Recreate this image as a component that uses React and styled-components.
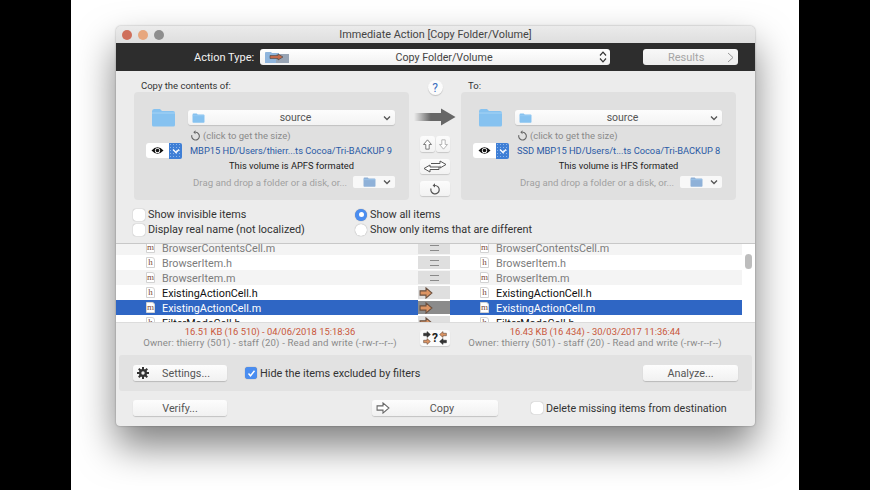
import React from "react";
import styled, { createGlobalStyle } from "styled-components";

const Global = createGlobalStyle`
  html, body { margin: 0; padding: 0; background: #000; }
  body { font-family: "Roboto", "Liberation Sans", sans-serif; font-size: 11px; color: #333; }
`;

const Stage = styled.div`
  width: 870px; height: 490px; background: #000; overflow: hidden;
  display: flex; justify-content: center;
`;
const Sheet = styled.div`
  width: 728px; height: 490px; background: #fff; overflow: hidden; padding: 26px 0 0 45px; box-sizing: border-box;
`;
const Win = styled.div`
  width: 639px; height: 400px; background: #ececec; border-radius: 5px 5px 4px 4px;
  box-shadow: 0 20px 38px rgba(0,0,0,.5), 0 0 2px rgba(0,0,0,.35);
  display: flex; flex-direction: column; overflow: visible;
`;
const TitleBar = styled.div`
  height: 17px; position: relative; display: flex; align-items: center; justify-content: center;
  background: linear-gradient(#ebebeb, #dedede); border-radius: 5px 5px 0 0;
  font-size: 10.85px; color: #444;
`;
const Lights = styled.div`
  position: absolute; left: 6px; top: 4px; display: flex; gap: 6px;
`;
const Light = styled.span`
  width: 10px; height: 10px; border-radius: 50%; background: ${p => p.$c};
`;
const ActionBar = styled.div`
  height: 28px; background: #2d2d2d; display: flex; align-items: center; padding-left: 78px;
`;
const ActionLabel = styled.span`
  color: #f2f2f2; font-size: 11px; width: 60px; margin-right: 6px; white-space: nowrap;
`;
const BigSelect = styled.div`
  width: 350px; height: 16px; background: linear-gradient(#fff, #f1f1f1); border-radius: 3px;
  display: flex; align-items: center; padding: 0 3px 0 5px; box-sizing: border-box; color: #444;
`;
const BigSelectText = styled.span`
  flex: 1; text-align: center; font-size: 10.7px;
`;
const ResultsButton = styled.div`
  width: 95px; height: 16px; margin-left: 33px; background: linear-gradient(#f8f8f8, #ececec); border-radius: 3px;
  display: flex; align-items: center; padding: 0 4px 0 25px; box-sizing: border-box;
  color: #a5a5a5; font-size: 11px;
`;
const ResultsText = styled.span`
  flex: 1;
`;
const Main = styled.div`
  height: 172px; box-sizing: border-box; padding: 9px 0 0 18px;
`;
const Columns = styled.div`
  display: grid; grid-template-columns: 275px 52px 275px;
`;
const Side = styled.div`
  display: flex; flex-direction: column;
`;
const SideLabel = styled.div`
  height: 12px; line-height: 12px; padding-left: 7px; font-size: 9.5px; color: #333;
`;
const Panel = styled.div`
  height: 108px; box-sizing: border-box; background: #e0e0e0; border-radius: 4px; padding-top: 18px;
  display: flex; flex-direction: column;
`;
const FolderRow = styled.div`
  display: flex; align-items: center; padding-left: 17px; gap: 12px; height: 15px;
`;
const PopUp = styled.div`
  width: 207px; height: 15px; background: linear-gradient(#fdfdfd, #f3f3f3); border-radius: 3px; box-sizing: border-box;
  box-shadow: 0 1px 1px rgba(0,0,0,.14); display: flex; align-items: center; padding: 0 4px; color: #555; font-size: 10.5px;
`;
const PopUpText = styled.span`
  flex: 1; text-align: center; padding-left: 3px;
`;
const SizeRow = styled.div`
  display: flex; align-items: center; gap: 2px; height: 14px; margin-top: 3px; padding-left: 56px; color: #8a8a8a; font-size: 9.5px;
`;
const PathRow = styled.div`
  display: flex; align-items: center; height: 15px; margin-top: 1px; padding-left: 12px;
`;
const EyeButton = styled.div`
  width: 23px; height: 15px; background: #fff; border-radius: 3px 0 0 3px; display: flex; align-items: center; justify-content: center;
`;
const Badge = styled.div`
  width: 13px; height: 16px; border-radius: 0 2px 2px 0; display: flex; align-items: center; justify-content: center;
  background-color: #3f7fd6;
  background-image: radial-gradient(#8db6ea 0.7px, transparent 0.8px);
  background-size: 3px 3px;
`;
const PathText = styled.span`
  margin-left: 8px; color: #2a5aa5; font-size: 9.3px; white-space: nowrap;
`;
const VolumeText = styled.div`
  height: 14px; line-height: 14px; margin-top: 1px; color: #222; font-size: 9.3px; text-align: center; padding-left: 40px;
`;
const DragRow = styled.div`
  display: flex; align-items: center; height: 14px; margin-top: 2px; padding: 0 14px 0 59px; color: #a0a0a0; font-size: 9.65px; justify-content: space-between;
`;
const MiniPopUp = styled.div`
  width: 42px; height: 12px; background: #f8f8f8; border-radius: 2px; display: flex; align-items: center; justify-content: space-between; padding: 0 4px 0 10px; box-sizing: border-box;
`;
const Center = styled.div`
  display: flex; flex-direction: column; align-items: center;
`;
const Help = styled.div`
  width: 15px; height: 15px; border-radius: 50%; background: #fbfbfb; color: #3d6fc0; font-size: 12px;
  box-shadow: 0 1px 1px rgba(0,0,0,.18); display: flex; align-items: center; justify-content: center;
`;
const BigArrow = styled.div`
  margin-top: 13px; height: 18px; display: flex;
`;
const PairRow = styled.div`
  display: flex; gap: 1px; margin-top: 10px;
`;
const ToolButton = styled.div`
  width: ${p => p.$w}px; height: ${p => p.$h}px; margin-top: ${p => p.$mt || 0}px; background: linear-gradient(#fcfcfc, #f2f2f2); border-radius: 3px;
  box-shadow: 0 1px 1px rgba(0,0,0,.16); display: flex; align-items: center; justify-content: center;
`;
const Options = styled.div`
  margin-top: 7px; margin-left: -1px; display: grid; grid-template-columns: 222px auto; grid-auto-rows: 15px; font-size: 10.85px; color: #333;
`;
const Opt = styled.div`
  display: flex; align-items: center; gap: 3px; white-space: nowrap;
`;
const Check = styled.span`
  width: 12px; height: 12px; box-sizing: border-box; border-radius: ${p => (p.$round ? "50%" : "3px")};
  background: ${p => (p.$on ? "#4a8df0" : "#fff")}; box-shadow: 0 0 1px rgba(0,0,0,.45);
  display: inline-flex; align-items: center; justify-content: center; flex: none;
`;
const Dot = styled.span`
  width: 5px; height: 5px; border-radius: 50%; background: #fff;
`;
const List = styled.div`
  height: 79px; box-sizing: border-box; overflow: hidden; background: #fff; border-top: 1px solid #c8c8c8; position: relative;
`;
const ListInner = styled.div`
  margin-top: -4px;
`;
const Row = styled.div`
  height: 15px; display: grid; grid-template-columns: 302px 32px 292px 13px; background: ${p => (p.$alt ? "#f4f4f4" : "#fff")};
  color: ${p => (p.$c)}; font-size: 10.8px;
`;
const Name = styled.div`
  display: flex; align-items: center; gap: 7px; padding: 1px 0 0 30px; box-sizing: border-box; background: ${p => (p.$sel ? "#2f66c4" : "transparent")}; white-space: nowrap;
`;
const FileIcon = styled.span`
  width: 9px; height: 11px; box-sizing: border-box; background: #fff; border: 1px solid #d2d2d2; border-top-right-radius: 3px; margin-top: -1px;
  font-family: "Liberation Serif", serif; font-size: 9px; line-height: 9px; color: #7a4a3a; text-align: center; flex: none;
`;
const Mid = styled.div`
  margin: 1px 0; background: ${p => (p.$sel ? "#8b8b8b" : "#dfdfdf")}; display: flex; align-items: center;
  justify-content: ${p => (p.$eq ? "center" : "flex-start")}; padding-left: ${p => (p.$eq ? 0 : 1)}px;
`;
const EqualSign = styled.span`
  width: 9px; height: 4px; border-top: 1px solid #8a8a8a; border-bottom: 1px solid #8a8a8a;
`;
const Gutter = styled.div`
  background: #fff;
`;
const Thumb = styled.div`
  position: absolute; right: 3px; top: 10px; width: 7px; height: 15px; border-radius: 4px; background: #bdbdbd;
`;
const Info = styled.div`
  height: 33px; display: grid; grid-template-columns: 304px 30px 305px; box-sizing: border-box; border-top: 1px solid #dcdcdc;
`;
const InfoText = styled.div`
  padding: 3px ${p => p.$pr || 0}px 0 ${p => p.$pl || 0}px; text-align: center; line-height: 11px; font-size: 9.6px; letter-spacing: .15px; color: #8a8a8a; white-space: nowrap;
`;
const Stamp = styled.div`
  color: #c9563a; font-size: 9.4px; letter-spacing: 0; height: 11px;
`;
const MidInfo = styled.div`
  height: 16px; margin-top: 7px; background: #fbfbfb; border-radius: 3px; box-shadow: 0 1px 1px rgba(0,0,0,.15);
  display: flex; align-items: center; justify-content: center; gap: 1px;
`;
const ArrowStack = styled.span`
  display: flex; flex-direction: column; gap: 0;
`;
const QuestionMark = styled.span`
  font-weight: 700; color: #222; font-size: 12px;
`;
const Filters = styled.div`
  height: 36px; margin: 0 3px; background: #e2e2e2; border-radius: 3px; display: flex; align-items: center; padding: 0 14px;
`;
const Btn = styled.div`
  width: ${p => p.$w}px; height: 16px; background: linear-gradient(#fdfdfd, #f1f1f1); border-radius: 3px; box-shadow: 0 1px 1px rgba(0,0,0,.18);
  display: flex; align-items: center; position: relative; justify-content: center; color: #555; font-size: 10.8px; flex: none;
  box-sizing: border-box; padding-left: ${p => p.$pl || 0}px;
  margin-left: ${p => p.$ml || 0}px;
`;
const BtnIcon = styled.span`
  position: absolute; left: ${p => p.$l}px; top: 2px; display: flex;
`;
const CheckLabel = styled.label`
  display: flex; align-items: center; gap: 3px; color: #333; font-size: ${p => p.$fs}px; white-space: nowrap; margin-left: ${p => p.$ml}px;
`;
const Bottom = styled.div`
  flex: 1; display: flex; align-items: center; padding-left: 17px; padding-bottom: 1px;
`;
const Spacer = styled.div`flex: 1;`;

const Folder = ({ w = 25, h = 19, c = "#86c2f0" }) => (
  <svg width={w} height={h} viewBox="0 0 25 19" style={{ flex: "none" }}>
    <path d="M1 3.5Q1 1 3 1h6l2 2h11q2 0 2 2v12q0 1.5-1.5 1.5h-20Q1 18.5 1 17z" fill={c} />
    <path d="M1 5h23" stroke="#a5d3f5" strokeWidth="1" />
  </svg>
);
const Chevron = ({ c = "#555" }) => (
  <svg width="8" height="6" viewBox="0 0 8 6" style={{ flex: "none" }}><path d="M1 1.5l3 3 3-3" fill="none" stroke={c} strokeWidth="1.3" /></svg>
);
const Refresh = ({ s = 11, c = "#666" }) => (
  <svg width={s} height={s} viewBox="0 0 12 12" style={{ flex: "none" }}>
    <path d="M6 2.5a4.2 4.2 0 1 1-4 3" fill="none" stroke={c} strokeWidth="1.2" />
    <path d="M6 .2v4.4L3.6 2.4z" fill={c} />
  </svg>
);
const Eye = () => (
  <svg width="13" height="9" viewBox="0 0 13 9">
    <path d="M.5 4.5Q6.5-2 12.5 4.5 6.5 11 .5 4.5z" fill="#111" />
    <circle cx="6.5" cy="4.5" r="2.6" fill="#fff" /><circle cx="6.5" cy="4.5" r="1.8" fill="#111" />
  </svg>
);
const Tick = ({ s = 9 }) => (
  <svg width={s} height={s} viewBox="0 0 9 9"><path d="M1.5 4.5l2 2.3 4-5" fill="none" stroke="#fff" strokeWidth="1.4" /></svg>
);
const HollowArrow = ({ d = "right", w = 13, h = 11, fill = "#fff", stroke = "#666" }) => {
  const rot = { right: 0, left: 180, up: -90, down: 90 }[d];
  return (
    <svg width={w} height={h} viewBox="0 0 13 11" style={{ flex: "none", display: "block" }}>
      <path d="M1 3.5h5.5V.8L12 5.5 6.5 10.2V7.5H1z" fill={fill} stroke={stroke} strokeWidth="1" transform={`rotate(${rot} 6.5 5.5)`} />
    </svg>
  );
};
const OrangeArrow = () => <HollowArrow w={14} h={12} fill="#dc9463" stroke="#6a5040" />;
const Gear = () => (
  <svg width="12" height="12" viewBox="0 0 12 12">
    <g fill="#333">
      <circle cx="6" cy="6" r="4" />
      {[0, 45, 90, 135].map(a => <rect key={a} x="5" y="0" width="2" height="12" transform={`rotate(${a} 6 6)`} />)}
    </g>
    <circle cx="6" cy="6" r="1.7" fill="#eee" />
  </svg>
);
const ActionGlyph = () => (
  <svg width="24" height="12" viewBox="0 0 24 12" style={{ flex: "none" }}>
    <path d="M0 2q0-1 1-1h5l1 1h7v10H0z" fill="#8fb5dd" />
    <rect x="11" y="3" width="13" height="9" fill="#98a4b4" />
    <path d="M5 4.5h8V3l5 3-5 3V7.5H5z" fill="#c46a4a" stroke="#444" strokeWidth=".6" />
  </svg>
);
const Stepper = () => (
  <svg width="8" height="12" viewBox="0 0 8 12" style={{ flex: "none" }}>
    <path d="M1 4.5L4 1.2l3 3.3M1 7.5l3 3.3 3-3.3" fill="none" stroke="#333" strokeWidth="1.2" />
  </svg>
);

const SidePanel = ({ label, path, volume }) => (
  <Side>
    <SideLabel>{label}</SideLabel>
    <Panel>
      <FolderRow>
        <Folder />
        <PopUp>
          <Folder w={13} h={10} />
          <PopUpText>source</PopUpText>
          <Chevron />
        </PopUp>
      </FolderRow>
      <SizeRow><Refresh />(click to get the size)</SizeRow>
      <PathRow>
        <EyeButton><Eye /></EyeButton>
        <Badge><Chevron c="#fff" /></Badge>
        <PathText>{path}</PathText>
      </PathRow>
      <VolumeText>{volume}</VolumeText>
      <DragRow>
        <span>Drag and drop a folder or a disk, or...</span>
        <MiniPopUp><Folder w={13} h={10} c="#8fb1d8" /><Chevron /></MiniPopUp>
      </DragRow>
    </Panel>
  </Side>
);

const rows = [
  { n: "BrowserContentsCell.m", k: "m", alt: true, c: "#7c7c7c", st: "eq" },
  { n: "BrowserItem.h", k: "h", c: "#7c7c7c", st: "eq" },
  { n: "BrowserItem.m", k: "m", alt: true, c: "#7c7c7c", st: "eq" },
  { n: "ExistingActionCell.h", k: "h", c: "#111", st: "arrow" },
  { n: "ExistingActionCell.m", k: "m", sel: true, c: "#fff", st: "arrow" },
  { n: "FilterModeCell.h", k: "h", c: "#111", st: "arrow" },
];

export default function App() {
  return (
    <Stage>
      <Global />
      <Sheet>
        <Win>
          <TitleBar>
            <Lights>
              <Light $c="#cf6f5b" /><Light $c="#e7a77e" /><Light $c="#8e8e8e" />
            </Lights>
            Immediate Action [Copy Folder/Volume]
          </TitleBar>
          <ActionBar>
            <ActionLabel>Action Type:</ActionLabel>
            <BigSelect>
              <ActionGlyph />
              <BigSelectText>Copy Folder/Volume</BigSelectText>
              <Stepper />
            </BigSelect>
            <ResultsButton>
              <ResultsText>Results</ResultsText>
              <svg width="7" height="11" viewBox="0 0 7 11"><path d="M1 1l5 4.5L1 10" fill="none" stroke="#9a9a9a" strokeWidth="1" /></svg>
            </ResultsButton>
          </ActionBar>
          <Main>
            <Columns>
              <SidePanel label="Copy the contents of:" path="MBP15 HD/Users/thierr...ts Cocoa/Tri-BACKUP 9" volume="This volume is APFS formated" />
              <Center>
                <Help>?</Help>
                <BigArrow>
                  <svg width="42" height="18" viewBox="0 0 42 18">
                    <defs><linearGradient id="fade" x1="0" x2="1"><stop offset="0" stopColor="#666" stopOpacity="0" /><stop offset=".6" stopColor="#666" /></linearGradient></defs>
                    <rect x="0" y="5" width="28" height="8" fill="url(#fade)" />
                    <path d="M27 .5L41.5 9 27 17.5z" fill="#666" />
                  </svg>
                </BigArrow>
                <PairRow>
                  <ToolButton $w={15} $h={16}><HollowArrow d="up" w={11} h={11} /></ToolButton>
                  <ToolButton $w={14} $h={16}><HollowArrow d="down" w={11} h={11} stroke="#aaa" /></ToolButton>
                </PairRow>
                <ToolButton $w={30} $h={15} $mt={7}>
                  <svg width="26" height="13" viewBox="0 0 26 13">
                    <path d="M9 3.5h9V1l6 3.5L18 8V5.8" fill="#fff" stroke="#555" />
                    <path d="M17 7H8V5l-6 3.5L8 12V9.5h9z" fill="#fff" stroke="#555" />
                  </svg>
                </ToolButton>
                <ToolButton $w={30} $h={15} $mt={7}><Refresh s={12} c="#555" /></ToolButton>
              </Center>
              <SidePanel label="To:" path="SSD MBP15 HD/Users/t...ts Cocoa/Tri-BACKUP 8" volume="This volume is HFS formated" />
            </Columns>
            <Options>
              <Opt><Check />Show invisible items</Opt>
              <Opt><Check $round $on><Dot /></Check>Show all items</Opt>
              <Opt><Check />Display real name (not localized)</Opt>
              <Opt><Check $round />Show only items that are different</Opt>
            </Options>
          </Main>
          <List>
            <ListInner>
              {rows.map(r => (
                <Row key={r.n} $alt={r.alt} $c={r.c}>
                  <Name $sel={r.sel}><FileIcon>{r.k}</FileIcon>{r.n}</Name>
                  <Mid $sel={r.sel} $eq={r.st === "eq"}>{r.st === "eq" ? <EqualSign /> : <OrangeArrow />}</Mid>
                  <Name $sel={r.sel}><FileIcon>{r.k}</FileIcon>{r.n}</Name>
                  <Gutter />
                </Row>
              ))}
            </ListInner>
            <Thumb />
          </List>
          <Info>
            <InfoText $pl={4}>
              <Stamp>16.51 KB (16 510) - 04/06/2018 15:18:36</Stamp>
              Owner: thierry (501) - staff (20) - Read and write (-rw-r--r--)
            </InfoText>
            <MidInfo>
              <ArrowStack>
                <HollowArrow w={8} h={7} fill="#333" stroke="#333" />
                <HollowArrow w={8} h={7} fill="#dc9463" stroke="#6a5040" />
              </ArrowStack>
              <QuestionMark>?</QuestionMark>
              <ArrowStack>
                <HollowArrow d="left" w={8} h={7} fill="#dc9463" stroke="#6a5040" />
                <HollowArrow d="left" w={8} h={7} fill="#333" stroke="#333" />
              </ArrowStack>
            </MidInfo>
            <InfoText $pr={15}>
              <Stamp>16.43 KB (16 434) - 30/03/2017 11:36:44</Stamp>
              Owner: thierry (501) - staff (20) - Read and write (-rw-r--r--)
            </InfoText>
          </Info>
          <Filters>
            <Btn $w={94} $pl={12}><BtnIcon $l={4}><Gear /></BtnIcon>Settings...</Btn>
            <CheckLabel $ml={18} $fs={10.9}><Check $on><Tick /></Check>Hide the items excluded by filters</CheckLabel>
            <Spacer />
            <Btn $w={95}>Analyze...</Btn>
          </Filters>
          <Bottom>
            <Btn $w={94}>Verify...</Btn>
            <Btn $w={126} $ml={145} $pl={14}><BtnIcon $l={4}><HollowArrow w={14} h={12} /></BtnIcon>Copy</Btn>
            <CheckLabel $ml={33} $fs={10.7}><Check />Delete missing items from destination</CheckLabel>
          </Bottom>
        </Win>
      </Sheet>
    </Stage>
  );
}
